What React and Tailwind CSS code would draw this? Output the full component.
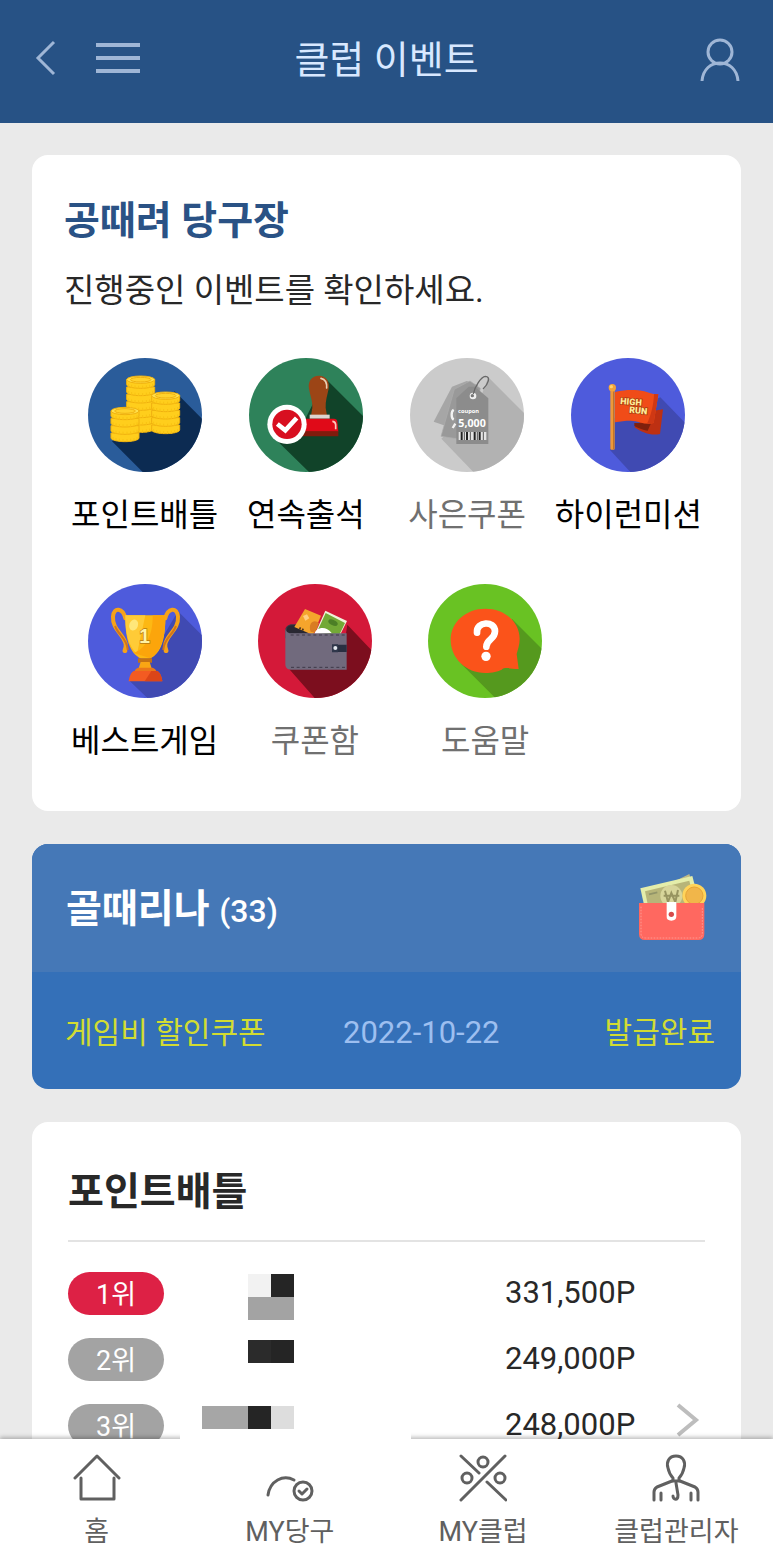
import React from "react";

// Round event icons share one frame, shadow is drawn first under the art
const IconCircle = ({ bg, shadow, shadowPoints, children }) => (
  <svg viewBox="0 0 342 342" className="block size-[114px] rounded-full" aria-hidden="true">
    <rect width="342" height="342" fill={bg} />
    <polygon points={shadowPoints} fill={shadow} />
    {children}
  </svg>
);

const CoinStack = ({ x, y, count }) => {
  const coins = Array.from({ length: count }, (_, i) => count - 1 - i);
  return (
    <g transform={`translate(${x} ${y})`} stroke="#efb010" strokeWidth="3">
      {coins.map((i) => (
        <g key={i}>
          <path
            d={`M0 ${12 + i * 22}v15c0 6 19 11 42 11s42-5 42-11v-15z`}
            fill="#ffce1c"
          />
          <path
            d={`M6 ${24 + i * 22}v9M15 ${27 + i * 22}v9M25 ${29 + i * 22}v9M36 ${30 + i * 22}v9M48 ${30 + i * 22}v9M59 ${29 + i * 22}v9M69 ${27 + i * 22}v9M78 ${24 + i * 22}v9`}
            stroke="#f8c213"
          />
        </g>
      ))}
      <ellipse cx="42" cy="12" rx="42" ry="11" fill="#ffe04c" />
      <ellipse cx="42" cy="12" rx="31" ry="7" fill="#ffd22c" />
    </g>
  );
};

const CoinsIcon = () => (
  <IconCircle bg="#2a5c9a" shadow="#0c2b52" shadowPoints="260,100 342,182 342,342 164,342 72,250">
    <CoinStack x={116} y={53} count={7} />
    <CoinStack x={191} y={101} count={5} />
    <CoinStack x={69} y={147} count={4} />
  </IconCircle>
);

const StampIcon = () => (
  <IconCircle bg="#2e825a" shadow="#114329" shadowPoints="230,62 342,174 342,342 180,342 78,242 160,200">
    <path d="M210 53c21 0 33 17 29 39-4 19-10 36-9 57l4 24h-48l4-24c1-21-7-38-10-57-4-22 8-39 30-39z" fill="#9c4516" />
    <path d="M216 61c13 3 18 16 17 29" fill="none" stroke="#e9d2b5" strokeWidth="5" strokeLinecap="round" />
    <rect x="182" y="170" width="60" height="12" fill="#ddd5cf" />
    <path d="M160 182h95q9 0 10 9l3 30H158z" fill="#e00a18" />
    <path d="M156 220h112v15H156z" fill="#811b0d" />
    <path d="M250 190q9 0 10 10v14" fill="none" stroke="#ffc8bd" strokeWidth="5" />
    <circle cx="114" cy="199" r="59" fill="#fff" />
    <circle cx="114" cy="199" r="44" fill="#d80f20" />
    <path d="M85 198l24 19 34-37" fill="none" stroke="#fff" strokeWidth="14" />
  </IconCircle>
);

const CouponIcon = () => (
  <IconCircle bg="#cbcbcb" shadow="#b2b2b2" shadowPoints="235,58 342,165 342,342 190,342 94,242 200,150">
    <path d="M126 86l44-17 34 13-50 138-83-29z" fill="#a6a6a6" />
    <path d="M133 94l47-25 31 22-30 157-88-13z" fill="#999" stroke="#adadad" strokeWidth="2" />
    <path d="M139 121l37-35h19l40 35v137h-96z" fill="#8c8c8c" />
    <path d="M131 155c-8 5-8 25 0 30M136 197l-8 13" fill="none" stroke="#f2f2f2" strokeWidth="7" />
    <circle cx="189" cy="114" r="10" fill="#f0f0f0" />
    <circle cx="187" cy="113" r="5" fill="#777" />
    <path d="M190 108c3-20 23-52 36-53 17 0 9 24-7 38" fill="none" stroke="#686868" strokeWidth="4" />
    <text x="144" y="166" fill="#fff" className="font-['Open_Sans'] text-[17px] font-bold">coupon</text>
    <text x="145" y="207" fill="#fff" className="font-['Open_Sans'] text-[32px] font-bold">5,000</text>
    <rect x="146" y="222" width="83" height="24" fill="#e4e4e4" />
    <path d="M155 222v24M171 222v24M194 222v24M209 222v24" stroke="#222" strokeWidth="6" />
    <path d="M163 222v24M181 222v24M202 222v24M220 222v24" stroke="#555" strokeWidth="3" />
  </IconCircle>
);

const FlagIcon = () => (
  <IconCircle bg="#4e5bdc" shadow="#404ab2" shadowPoints="268,118 342,194 342,342 178,342 117,276 130,180">
    <path d="M225 162l51-8-9 74c-25 6-52-3-77-20l20-18z" fill="#bd3012" />
    <path d="M190 195l50 1-10 22c-14-2-30-8-40-14z" fill="#7e200d" />
    <path d="M132 102c35-8 63-7 88-2 15 5 28 11 42 9l-14 86c-23 8-46-7-69-7-17 0-31 2-47 5z" fill="#f04c18" />
    <path d="M249 108l13 1-14 86-20 2c12-25 20-56 21-89z" fill="#cf3814" />
    <rect x="118" y="93" width="13" height="182" rx="3" fill="#ee9938" />
    <path d="M128 100v174" stroke="#b96d27" strokeWidth="3" />
    <circle cx="124" cy="89" r="11" fill="#f3a33b" />
    <circle cx="121" cy="86" r="5" fill="#ffd36f" />
    <g
      transform="rotate(5 180 140)"
      fill="#ffec98"
      stroke="#a8380e"
      strokeWidth="4"
      paintOrder="stroke"
      className="font-[Roboto] text-[27px] font-black"
    >
      <text x="147" y="141">HIGH</text>
      <text x="176" y="165">RUN</text>
    </g>
  </IconCircle>
);

const TrophyIcon = () => (
  <IconCircle bg="#4e5bdc" shadow="#404ab2" shadowPoints="270,82 342,154 342,342 178,342 122,288 200,200">
    <g fill="none" stroke="#f6a219" strokeWidth="12" strokeLinecap="round">
      <path d="M112 103C105 72 77 67 75 98c-3 38 35 55 38 83 2 13-8 22-1 20" />
      <path d="M232 103c7-31 35-36 38-5 3 38-35 55-38 83-2 13 8 22 1 20" />
    </g>
    <g fill="none" stroke="#cf741c" strokeWidth="6" strokeLinecap="round">
      <path d="M82 128c8 24 35 36 37 68" />
      <path d="M263 128c-8 24-35 36-37 68" />
    </g>
    <path d="M112 94h120c1 66-11 115-47 130h-26c-36-16-48-64-47-130z" fill="#fdb813" />
    <path d="M112 94h60l-25 115c-24-18-36-61-35-115z" fill="#ffcb37" />
    <path d="M194 94h38c1 60-10 108-45 129l-50-16c39-13 58-58 57-113z" fill="#fca50b" />
    <ellipse cx="137" cy="123" rx="13" ry="17" fill="#ffe77a" transform="rotate(20 137 123)" />
    <path d="M150 223h42v13h-42z" fill="#c47114" />
    <path d="M158 234h27l7 22h-41z" fill="#f9a514" />
    <path d="M150 251h44c6 2 10 6 12 12h-67c2-6 5-10 11-12z" fill="#e9771a" />
    <path d="M137 261h71c9 5 13 18 15 31H122c2-13 6-26 15-31z" fill="#f35b22" />
    <path d="M190 261h18c9 5 13 18 15 31h-53z" fill="#db4518" />
    <text
      x="154"
      y="178"
      fill="#fff3a2"
      stroke="#b77a12"
      strokeWidth="4"
      paintOrder="stroke"
      className="font-['Liberation_Sans'] text-[58px] font-bold"
    >
      1
    </text>
  </IconCircle>
);

const WalletIcon = () => (
  <IconCircle bg="#d41939" shadow="#7c0e1e" shadowPoints="268,122 342,200 342,342 170,342 94,256 250,240">
    <path d="M82 138c0-9 9-17 20-17h50v42H82z" fill="#3b3946" />
    <path d="M87 135c0-7 7-11 15-11h50v24H87z" fill="#292832" />
    <path d="M141 75l48 20-24 58-56-24z" fill="#f5a52c" />
    <path d="M135 96l12-5 7 12-12 7z" fill="#ffcf82" />
    <path d="M158 143c-10-28 13-40 25-25l-11 28z" fill="#d97c22" />
    <path d="M124 132l15 7" stroke="#4c351d" strokeWidth="6" strokeDasharray="5 4" />
    <path d="M202 80l65 31-24 48-74-5z" fill="#f0f4da" />
    <path d="M203 87l58 30-19 40h-71z" fill="#73a936" />
    <ellipse cx="225" cy="116" rx="15" ry="8" fill="#4c7f26" transform="rotate(25 225 116)" />
    <path d="M169 151c3-19 33-29 52-4z" fill="#fff" />
    <path d="M82 134c2 10 9 14 20 14h164v109H99c-12 0-17-7-17-17z" fill="#716a7d" />
    <path d="M98 153h166M99 250h164" fill="none" stroke="#3e3948" strokeWidth="3" strokeDasharray="9 8" />
    <path d="M232 182h34v22h-34q-10-11 0-22z" fill="#292f41" />
    <path d="M222 181h18v24h-18z" fill="#30374b" />
    <circle cx="232" cy="192" r="6" fill="#e3e7ee" />
  </IconCircle>
);

const HelpIcon = () => (
  <IconCircle bg="#69c223" shadow="#55991e" shadowPoints="252,105 342,195 342,342 202,342 100,240 220,200">
    <path d="M172 74c57 0 103 38 103 91 0 18-6 33-9 45l6 45c-21 1-40-8-51 2-9 5-29 10-49 10-58 0-104-45-104-99 0-54 46-94 104-94z" fill="#fb531a" />
    <path d="M147 146c-3-35 54-37 54-4 0 26-26 22-26 46" fill="none" stroke="#fff" strokeWidth="20" strokeLinecap="round" />
    <circle cx="174" cy="217" r="14" fill="#fff" />
  </IconCircle>
);

const PurseIcon = () => (
  <svg viewBox="0 0 204 204" className="size-[68px]" aria-hidden="true">
    <path d="M9 70L151 0l18 68H20z" fill="#beb987" />
    <path d="M4 43L160 6l25 95H17z" fill="#e4edaa" />
    <path d="M18 52L151 20l19 75H27z" fill="#b7b579" />
    <path d="M30 61l25-6" stroke="#929569" strokeWidth="5" />
    <circle cx="97" cy="66" r="33" fill="#d7d59a" />
    <path d="M78 50l9 34 10-27 12 27 8-36M74 65h47" fill="none" stroke="#979460" strokeWidth="6" />
    <circle cx="166" cy="65" r="36" fill="#ffd45a" />
    <circle cx="166" cy="65" r="26" fill="#f1b64a" stroke="#e6a536" strokeWidth="3" />
    <path d="M0 87h196v93q0 18-18 18H18q-18 0-18-18z" fill="#ff6860" />
    <path d="M6 98v80q0 14 14 14h156q14 0 14-14V98" fill="none" stroke="#ff9990" strokeWidth="3" strokeDasharray="5 4" />
    <path d="M83 84h29v43q0 13-15 13t-14-13z" fill="#fff" />
    <circle cx="97" cy="121" r="8" fill="#d74a4a" />
  </svg>
);

const firstEvents = [
  { name: "포인트배틀", Icon: CoinsIcon, active: true },
  { name: "연속출석", Icon: StampIcon, active: true },
  { name: "사은쿠폰", Icon: CouponIcon, active: false },
  { name: "하이런미션", Icon: FlagIcon, active: true },
];

const secondEvents = [
  { name: "베스트게임", Icon: TrophyIcon, active: true },
  { name: "쿠폰함", Icon: WalletIcon, active: false },
  { name: "도움말", Icon: HelpIcon, active: false },
];

// Player names stay masked, "" leaves a tile empty
const ranks = [
  { rank: "1위", point: "331,500P", mask: ["", "", "#f2f2f2", "#252525", "", "", "#a3a3a3", "#a3a3a3"] },
  { rank: "2위", point: "249,000P", mask: ["", "", "#2b2b2b", "#252525"] },
  { rank: "3위", point: "248,000P", mask: ["#a6a6a6", "#a6a6a6", "#252525", "#dddddd"] },
];

const EventButton = ({ name, Icon, active }) => (
  <button type="button" className="flex w-1/4 shrink-0 flex-col items-center gap-[23px]">
    <Icon />
    <span className={`text-[32px] leading-10 whitespace-nowrap ${active ? "text-black" : "text-[#707070]"}`}>
      {name}
    </span>
  </button>
);

const HomeIcon = () => (
  <>
    <path d="M2 24L24 2l22 22" />
    <path d="M8 24v21h33V24" />
  </>
);

const MyGameIcon = () => (
  <>
    <path d="M2 41c2-14 15-21 26-15" />
    <circle cx="37" cy="37" r="9" />
    <path d="M33 37l3 3 5-5" />
  </>
);

const MyClubIcon = () => (
  <>
    <path d="M2 2l18 17M46 2L2 46M28 28l19 18" />
    <circle cx="24" cy="8" r="5" />
    <circle cx="8" cy="24" r="5" />
    <circle cx="41" cy="24" r="5" />
  </>
);

const ManagerIcon = () => (
  <>
    <path d="M24 2c-7 0-10 6-8 12 1 5 3 8 5 10v3h6v-3c2-2 4-5 5-10 2-6-1-12-8-12z" />
    <path d="M20 27L5 33q-3 2-3 5v8M28 27l15 6q3 2 3 5v8M9 39v7M39 39v7" />
    <path d="M24 29l2 12c0 6-5 5-5 1" />
  </>
);

const navItems = [
  { label: "홈", Icon: HomeIcon },
  { label: "MY당구", Icon: MyGameIcon },
  { label: "MY클럽", Icon: MyClubIcon },
  { label: "클럽관리자", Icon: ManagerIcon },
];

const App = () => {
  return (
    <div className="flex h-screen flex-col bg-[#eaeaea] font-[Roboto,'Noto_Sans_CJK_KR',sans-serif] text-[#282828]">
      {/* Header */}
      <header className="flex h-[123px] shrink-0 items-center bg-[#275285] px-8 pb-2 text-[#9fb6d6]">
        <div className="flex flex-1 items-center gap-9">
          <button type="button" aria-label="뒤로">
            <svg viewBox="0 0 28 36" className="h-9 w-7" fill="none" stroke="currentColor" strokeWidth="3">
              <path d="M22 2L6 18l16 16" />
            </svg>
          </button>
          <button type="button" aria-label="메뉴">
            <svg viewBox="0 0 44 32" className="h-8 w-11" stroke="currentColor" strokeWidth="4">
              <path d="M0 3h44M0 16h44M0 29h44" />
            </svg>
          </button>
        </div>
        <h1 className="pt-1 text-[38px] leading-12 text-[#d8e8ff]">클럽 이벤트</h1>
        <div className="flex flex-1 justify-end pt-1">
          <button type="button" aria-label="내 정보">
            <svg viewBox="0 0 42 44" className="h-11 w-[42px]" fill="none" stroke="currentColor" strokeWidth="3">
              <ellipse cx="21" cy="14" rx="12" ry="12" />
              <path d="M3 43c1-12 9-18 18-18s17 6 18 18" />
            </svg>
          </button>
        </div>
      </header>

      <main className="flex min-h-0 flex-1 flex-col gap-[33px] overflow-y-auto p-8 [scrollbar-width:none]">
        {/* Events */}
        <section className="shrink-0 rounded-[16px] bg-white px-8 pt-[42px] pb-[50px]">
          <h2 className="text-[39px] leading-12 font-bold text-[#2a5285]">공때려 당구장</h2>
          <p className="mt-[26px] text-[33px] leading-10">진행중인 이벤트를 확인하세요.</p>
          <div className="mt-[47px] flex">
            {firstEvents.map((item) => (
              <EventButton key={item.name} {...item} />
            ))}
          </div>
          <div className="mt-[49px] flex gap-[9px]">
            {secondEvents.map((item) => (
              <EventButton key={item.name} {...item} />
            ))}
          </div>
        </section>

        {/* Coupon */}
        <section className="shrink-0 overflow-hidden rounded-[16px] bg-[#3470b8]">
          <div className="flex h-32 items-center justify-between bg-[#4578b7] px-[34px]">
            <h2 className="pt-1 text-[39px] leading-12 font-bold text-white">
              골때리나 <span className="text-[32px] font-medium">(33)</span>
            </h2>
            <PurseIcon />
          </div>
          <div className="grid h-[117px] grid-cols-[278px_1fr_auto] items-center pt-1 pr-[26px] pl-[33px] text-[30px] leading-10 text-[#d2dc32]">
            <span>게임비 할인쿠폰</span>
            <time className="text-[31px] text-[#9dbff0]">2022-10-22</time>
            <span>발급완료</span>
          </div>
        </section>

        {/* Ranking */}
        <section className="shrink-0 rounded-[16px] bg-white px-9 pt-[46px] pb-9">
          <h2 className="text-[39px] leading-12 font-bold">포인트배틀</h2>
          <div className="mt-6 flex items-end border-t-2 border-[#e3e3e3] pt-[18px]">
            <table className="flex-1 table-fixed">
              <tbody>
                {ranks.map((row, idx) => (
                  <tr key={row.rank} className="h-[66px]">
                    <th scope="row" className="w-[134px] p-0 text-left font-normal">
                      <span
                        className={`flex h-[43px] w-24 items-center justify-center rounded-full pt-1 text-[27px] leading-8 text-white ${
                          idx === 0 ? "bg-[#dd2145]" : "bg-[#a3a3a3]"
                        }`}
                      >
                        {row.rank}
                      </span>
                    </th>
                    <td className="p-0 pt-3.5 align-top">
                      <div className="grid w-[92px] grid-cols-4" aria-hidden="true">
                        {row.mask.map((color, i) => (
                          <span key={i} className="h-[23px]" style={{ backgroundColor: color }} />
                        ))}
                      </div>
                    </td>
                    <td className="w-[168px] p-0 text-[31px] leading-10">{row.point}</td>
                  </tr>
                ))}
              </tbody>
            </table>
            <button type="button" aria-label="더보기" className="pb-5">
              <svg viewBox="0 0 32 36" className="h-9 w-8" fill="none" stroke="#bdbdbd" strokeWidth="4">
                <path d="M5 3l18 15L5 33" />
              </svg>
            </button>
          </div>
        </section>
      </main>

      {/* Bottom navigation */}
      <nav className="relative z-10 grid shrink-0 grid-cols-4 bg-white shadow-[0_-2px_4px_rgba(0,0,0,0.25)]">
        <div className="absolute -top-2 left-[180px] h-2 w-[231px] bg-white" />
        {navItems.map(({ label, Icon }) => (
          <a key={label} href="#" className="flex flex-col items-center pt-[15px] text-[#606060]">
            <svg
              viewBox="0 0 48 48"
              className="size-12"
              fill="none"
              stroke="currentColor"
              strokeWidth="3"
              strokeLinecap="round"
              strokeLinejoin="round"
              aria-hidden="true"
            >
              <Icon />
            </svg>
            <span className="mt-4 text-[27px] leading-7">{label}</span>
          </a>
        ))}
      </nav>
    </div>
  );
};

export default App;
